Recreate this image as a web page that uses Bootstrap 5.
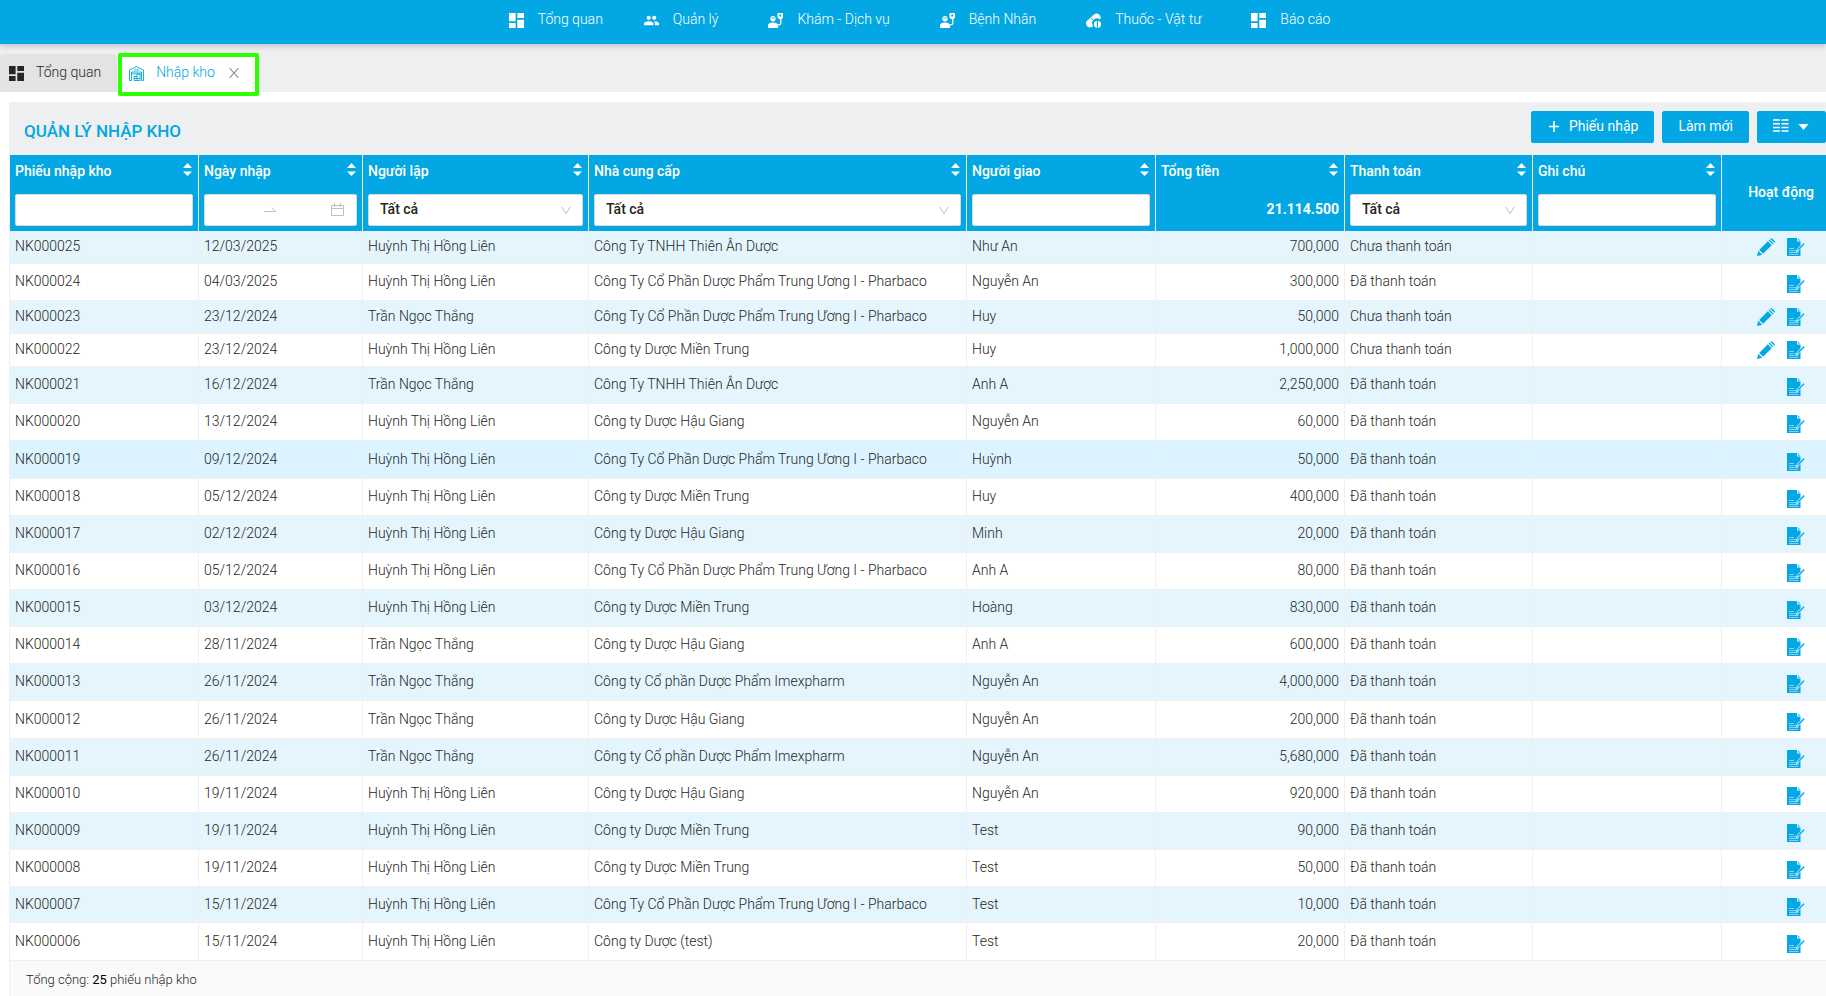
<!DOCTYPE html>
<html lang="vi">
<head>
<meta charset="utf-8">
<meta name="viewport" content="width=device-width, initial-scale=1">
<title>Quản lý nhập kho</title>
<link href="https://cdn.jsdelivr.net/npm/bootstrap@5.3.0/dist/css/bootstrap.min.css" rel="stylesheet">
<style>
  :root { --brand: #02a7e3; --panel: #eeeff1; --line: #f0f0f0; }
  body { font-family: Roboto, "Liberation Sans", sans-serif; font-size: 14px; font-weight: 300; line-height: 22px; color: #262626; background: #fff; overflow-x: hidden; }
  a { text-decoration: none; }
  svg { display: block; flex: none; fill: currentColor; }
  .ico { width: 15px; height: 15px; }
  .topbar { background: var(--brand); height: 44px; padding: 8px 0 0 13px; box-shadow: 0 2px 6px rgba(0,0,0,.2); z-index: 2; }
  .topbar a { color: #fff; display: flex; gap: 14px; padding: 0 25px; }
  .topbar a:first-child { padding-right: 16px; }
  .topbar .ico { margin-top: 5px; }
  .tabstrip { background: var(--panel); height: 48px; padding-top: 10px; }
  .tab-item { height: 38px; padding: 7px 16px 0 9px; gap: 12px; background: #e3e3e3; color: #262626; border-radius: 4px 4px 0 0; }
  .tab-item .ico { margin-top: 5px; }
  .tab-open { height: 43px; margin: -1px 0 0 1px; border: 4px solid #2bff00; border-radius: 2px; background: #fff; padding: 4px 16px 0 7px; gap: 12px; z-index: 1; }
  .tab-open a { color: var(--brand); }
  .tab-open .ico { color: var(--brand); margin-top: 5px; }
  .tab-open button { border: 0; background: none; padding: 0; margin: 7px 0 0 2px; height: 10px; color: #8c8c8c; }
  .panel { margin: 10px 0 0 9px; }
  .panel-head { background: var(--panel); height: 53px; padding: 0 0 0 15px; }
  .panel-head h1 { font-size: 17px; font-weight: 500; line-height: 24px; margin: 4px 0 0; color: var(--brand); }
  .btn-brand { --bs-btn-color: #fff; --bs-btn-bg: var(--brand); --bs-btn-border-color: var(--brand); --bs-btn-hover-color: #fff; --bs-btn-hover-bg: #0596cb; --bs-btn-active-bg: #0596cb; --bs-btn-active-color: #fff; --bs-btn-border-radius: 2px; --bs-btn-font-size: 14px; --bs-btn-line-height: 22px; height: 32px; padding: 3px 15px 5px; }
  .stock { table-layout: fixed; border-left: 1px solid var(--line); margin: 0; border-collapse: separate; border-spacing: 0; width: 100%; }
  .stock th { background: var(--brand); color: #fff; font-weight: 500; padding: 5px; height: 76px; vertical-align: top; border-right: 1px solid var(--line); }
  .stock th:last-child, .stock td:last-child { border-right: 0; }
  .head-line { height: 34px; }
  .sort { width: 9px; height: 13px; margin: 3px 1px 0 0; }
  .box { display: block; width: 100%; height: 32px; border: 1px solid #d9d9d9; border-radius: 2px; background-color: #fff; color: #262626; font-size: 14px; font-weight: 500; line-height: 22px; padding: 3px 11px 5px; }
  select.box { appearance: none; background-image: url("data:image/svg+xml,%3Csvg xmlns='http://www.w3.org/2000/svg' viewBox='0 0 10 9'%3E%3Cpath d='M.6.8 5 7.6 9.4.8' fill='none' stroke='%23bfbfbf'/%3E%3C/svg%3E"); background-repeat: no-repeat; background-size: 10px 9px; background-position: right 11px center; }
  .range { color: #bfbfbf; padding-right: 12px; }
  .range input { border: 0; padding: 0; min-width: 0; flex: 1 1 0; outline: 0; font-size: 14px; height: 20px; }
  .range-arrow { margin: 0 12px 0 4px; }
  .stock td { height: 37px; padding: 0 5px 2px; vertical-align: middle; border-right: 1px solid var(--line); border-bottom: 1px solid var(--line); white-space: nowrap; }
  .stock tbody tr:nth-child(odd) { background: #e4f5fd; }
  .stock tbody tr.is-hover { background: #dbf4ff; }
  .stock .h-33 td { height: 33px; }
  .stock .h-36 td { height: 36px; }
  .stock .h-38 td { height: 38px; }
  .stock td:nth-child(6) { text-align: right; }
  .stock td.acts { padding: 4px 21px 0 0; }
  .stock .h-33 td.acts { padding-top: 0; }
  .acts div { display: flex; justify-content: flex-end; gap: 12px; }
  .acts a { color: var(--brand); }
  .acts svg { width: 18px; height: 18px; }
  .total { background: #fafafa; border-left: 1px solid var(--line); padding: 8px 16px 0; font-size: 13px; }
  .total b { font-weight: 400; color: #000; }
</style>
</head>
<body class="min-vh-100 d-flex flex-column">

<svg class="d-none" aria-hidden="true">
  <symbol id="i-dash" viewBox="0 0 15 15"><path d="M0 0h6.6v8.3H0zM0 10h6.6v5H0zM8.3 0H15v5H8.3zM8.3 6.7H15V15H8.3z"/></symbol>
  <symbol id="i-people" viewBox="1 1 22 22"><path d="M16 11c1.66 0 2.99-1.34 2.99-3S17.66 5 16 5s-3 1.34-3 3 1.340 3 3 3zm-8 0c1.66 0 2.990-1.340 2.990-3S9.660 5 8 5 5 6.340 5 8s1.340 3 3 3zm0 2c-2.330 0-7 1.170-7 3.500V19h14v-2.500c0-2.330-4.670-3.500-7-3.500zm8 0c-.29 0-.62.020-.97.050 1.160.840 1.970 1.970 1.970 3.450V19h6v-2.500c0-2.330-4.670-3.500-7-3.500z"/></symbol>
  <symbol id="i-patient" viewBox="0 0 15 15"><path d="M5 3c1.600 0 2.700 1.200 2.700 2.700S6.600 8.500 5 8.500 2.300 7.300 2.300 5.700 3.400 3 5 3zM0 15v-2.600C0 10.200 3 9.400 5 9.400s5 .8 5 3V15z"/><path d="M9.500 0H15v4.600l-1.500 1.300h-2.500L9.500 4.600zm1.800 1.500v2h1.900v-2z" fill-rule="evenodd"/><path d="M12.800 5v5.300q0 1.400-2.800 1.700" fill="none" stroke="currentColor" stroke-width="1.300"/><path d="M3.300 5.100h3.400" stroke="#02a7e3" stroke-width=".8"/></symbol>
  <symbol id="i-pill" viewBox="0 0 15 15"><path d="M1.500 7.200 8.400 1.200a4 4 0 0 1 5.600 5.400 4.700 4.700 0 0 0-6.800 6.400A4 4 0 0 1 .6 12.400 4 4 0 0 1 1.500 7.200z"/><path d="m4.800 4.600 3.800 3.600" stroke="#02a7e3" stroke-width=".9"/><path d="M10.900 7.800v7.100a3.600 3.600 0 0 1 0-7.100zM12 7.800a3.600 3.600 0 0 1 0 7.100z"/></symbol>
  <symbol id="i-store" viewBox="0 0 15 15"><g fill="none" stroke="currentColor" stroke-width=".9"><path d="M.5 14.500V4L7.500.6l7 3.400v10.500h-2V6h-10v8.500zM2.500 7.800h10M5 3.900h5M5 14.500v-4h3v-2.500h3v6.500zM8 10.500v4M5 12.500h6"/></g></symbol>
  <symbol id="i-sort" viewBox="0 0 9 13"><path d="M4.500 0 9 5H0zM0 8.500h9L4.500 13z"/></symbol>
  <symbol id="i-edit" viewBox="0 0 18 18"><path d="m0 18 1.300-5.200 3.900 3.900zM2.200 11.900l8.600-8.600 3.900 3.900-8.600 8.600zM11.600 2.500l.9-.9 3.900 3.900-.9.9zM13.400.9c.7-.7 1.200-.8 1.900-.2l2.100 2.100c.7.700.6 1.200 0 1.900z"/></symbol>
  <symbol id="i-note" viewBox="0 0 18 18"><path d="M0 0h10v3.500h3.500V18H0z"/><path d="M10.800 0 13.500 2.800h-2.700z" opacity=".7"/><path d="M2 10.500h5M2 12.700h9.500M2 14.500h9.500M2 16.400h9.500" stroke="#fff" stroke-opacity=".65" stroke-width=".8"/><path d="m9.400 13.800 1-2.800L16.600 4.800 18 6.200 12 12.400z" stroke="#e4f5fd" stroke-width=".9"/></symbol>
</svg>

<header class="position-relative">
  <nav class="topbar position-relative d-flex justify-content-center" aria-label="Menu chính">
    <a href="#"><svg class="ico"><use href="#i-dash"/></svg>Tổng quan</a>
    <a href="#"><svg class="ico"><use href="#i-people"/></svg>Quản lý</a>
    <a href="#"><svg class="ico"><use href="#i-patient"/></svg>Khám - Dịch vụ</a>
    <a href="#"><svg class="ico"><use href="#i-patient"/></svg>Bệnh Nhân</a>
    <a href="#"><svg class="ico"><use href="#i-pill"/></svg>Thuốc - Vật tư</a>
    <a href="#"><svg class="ico"><use href="#i-dash"/></svg>Báo cáo</a>
  </nav>
  <div class="tabstrip d-flex">
    <a href="#" class="tab-item d-flex"><svg class="ico"><use href="#i-dash"/></svg>Tổng quan</a>
    <div class="tab-open position-relative d-flex">
      <svg class="ico"><use href="#i-store"/></svg><a href="#">Nhập kho</a>
      <button type="button" aria-label="Đóng"><svg width="10" height="10" viewBox="0 0 10 10"><path d="m.7.200 8.600 9.600M9.300.2.700 9.800" stroke="currentColor" stroke-width="1.100"/></svg></button>
    </div>
  </div>
</header>

<main class="panel d-flex flex-column flex-grow-1">
  <div class="panel-head d-flex align-items-center justify-content-between">
    <h1>QUẢN LÝ NHẬP KHO</h1>
    <div class="d-flex gap-2 pb-1">
      <button type="button" class="btn btn-brand d-flex align-items-center"><svg class="me-2" width="14" height="14" viewBox="0 0 14 14"><path d="M7 2v11M2 7.500h10" stroke="currentColor" stroke-width="1.600"/></svg>Phiếu nhập</button>
      <button type="button" class="btn btn-brand">Làm mới</button>
      <button type="button" class="btn btn-brand d-flex align-items-center" aria-label="Chọn cột"><svg width="37" height="14" viewBox="0 0 37 14"><path d="M0 1h7M8.500 1h7M0 4.700h7M8.500 4.700h7M0 8.400h7M8.500 8.400h7M0 12.100h7M8.500 12.100h7" stroke="currentColor" stroke-width="1.500"/><path d="M25.500 5h10l-5 6z"/></svg></button>
    </div>
  </div>

  <table class="stock">
    <colgroup><col width="189"><col width="164"><col width="226"><col><col width="189"><col width="189"><col width="188"><col width="189"><col width="104"></colgroup>
    <thead>
      <tr>
        <th><div class="head-line d-flex justify-content-between"><label for="f-code">Phiếu nhập kho</label><svg class="sort"><use href="#i-sort"/></svg></div><input id="f-code" class="box" type="text"></th>
        <th><div class="head-line d-flex justify-content-between"><label for="f-from">Ngày nhập</label><svg class="sort"><use href="#i-sort"/></svg></div>
          <div class="box range d-flex align-items-center"><input id="f-from" type="text" aria-label="Từ ngày"><svg class="range-arrow" width="12" height="5" viewBox="0 0 12 5"><path d="M0 4.500h12M8 .8l3.500 3.500" fill="none" stroke="currentColor"/></svg><input type="text" aria-label="Đến ngày"><svg width="13" height="13" viewBox="0 0 13 13"><path d="M.5 2.500h12v10H.5zM.5 5.500h12M3.500 0v4M9.500 0v4" fill="none" stroke="currentColor"/></svg></div></th>
        <th><div class="head-line d-flex justify-content-between"><label for="f-user">Người lập</label><svg class="sort"><use href="#i-sort"/></svg></div><select id="f-user" class="box"><option>Tất cả</option></select></th>
        <th><div class="head-line d-flex justify-content-between"><label for="f-sup">Nhà cung cấp</label><svg class="sort"><use href="#i-sort"/></svg></div><select id="f-sup" class="box"><option>Tất cả</option></select></th>
        <th><div class="head-line d-flex justify-content-between"><label for="f-ship">Người giao</label><svg class="sort"><use href="#i-sort"/></svg></div><input id="f-ship" class="box" type="text"></th>
        <th><div class="head-line d-flex justify-content-between"><span>Tổng tiền</span><svg class="sort"><use href="#i-sort"/></svg></div><div class="text-end fw-bold pt-1">21.114.500</div></th>
        <th><div class="head-line d-flex justify-content-between"><label for="f-pay">Thanh toán</label><svg class="sort"><use href="#i-sort"/></svg></div><select id="f-pay" class="box"><option>Tất cả</option></select></th>
        <th><div class="head-line d-flex justify-content-between"><label for="f-note">Ghi chú</label><svg class="sort"><use href="#i-sort"/></svg></div><input id="f-note" class="box" type="text"></th>
        <th class="align-middle text-end pe-2 pb-2"><span class="me-1">Hoạt động</span></th>
      </tr>
    </thead>
    <tbody>
      <tr class="h-33"><td>NK000025</td><td>12/03/2025</td><td>Huỳnh Thị Hồng Liên</td><td>Công Ty TNHH Thiên Ân Dược</td><td>Như An</td><td>700,000</td><td>Chưa thanh toán</td><td></td><td class="acts"><div><a href="#" aria-label="Sửa"><svg><use href="#i-edit"/></svg></a><a href="#" aria-label="Chi tiết"><svg><use href="#i-note"/></svg></a></div></td></tr>
      <tr><td>NK000024</td><td>04/03/2025</td><td>Huỳnh Thị Hồng Liên</td><td>Công Ty Cổ Phần Dược Phẩm Trung Ương I - Pharbaco</td><td>Nguyễn An</td><td>300,000</td><td>Đã thanh toán</td><td></td><td class="acts"><div><a href="#" aria-label="Chi tiết"><svg><use href="#i-note"/></svg></a></div></td></tr>
      <tr class="h-33"><td>NK000023</td><td>23/12/2024</td><td>Trần Ngọc Thắng</td><td>Công Ty Cổ Phần Dược Phẩm Trung Ương I - Pharbaco</td><td>Huy</td><td>50,000</td><td>Chưa thanh toán</td><td></td><td class="acts"><div><a href="#" aria-label="Sửa"><svg><use href="#i-edit"/></svg></a><a href="#" aria-label="Chi tiết"><svg><use href="#i-note"/></svg></a></div></td></tr>
      <tr class="h-33"><td>NK000022</td><td>23/12/2024</td><td>Huỳnh Thị Hồng Liên</td><td>Công ty Dược Miền Trung</td><td>Huy</td><td>1,000,000</td><td>Chưa thanh toán</td><td></td><td class="acts"><div><a href="#" aria-label="Sửa"><svg><use href="#i-edit"/></svg></a><a href="#" aria-label="Chi tiết"><svg><use href="#i-note"/></svg></a></div></td></tr>
      <tr><td>NK000021</td><td>16/12/2024</td><td>Trần Ngọc Thắng</td><td>Công Ty TNHH Thiên Ân Dược</td><td>Anh A</td><td>2,250,000</td><td>Đã thanh toán</td><td></td><td class="acts"><div><a href="#" aria-label="Chi tiết"><svg><use href="#i-note"/></svg></a></div></td></tr>
      <tr><td>NK000020</td><td>13/12/2024</td><td>Huỳnh Thị Hồng Liên</td><td>Công ty Dược Hậu Giang</td><td>Nguyễn An</td><td>60,000</td><td>Đã thanh toán</td><td></td><td class="acts"><div><a href="#" aria-label="Chi tiết"><svg><use href="#i-note"/></svg></a></div></td></tr>
      <tr class="h-38 is-hover"><td>NK000019</td><td>09/12/2024</td><td>Huỳnh Thị Hồng Liên</td><td>Công Ty Cổ Phần Dược Phẩm Trung Ương I - Pharbaco</td><td>Huỳnh</td><td>50,000</td><td>Đã thanh toán</td><td></td><td class="acts"><div><a href="#" aria-label="Chi tiết"><svg><use href="#i-note"/></svg></a></div></td></tr>
      <tr><td>NK000018</td><td>05/12/2024</td><td>Huỳnh Thị Hồng Liên</td><td>Công ty Dược Miền Trung</td><td>Huy</td><td>400,000</td><td>Đã thanh toán</td><td></td><td class="acts"><div><a href="#" aria-label="Chi tiết"><svg><use href="#i-note"/></svg></a></div></td></tr>
      <tr><td>NK000017</td><td>02/12/2024</td><td>Huỳnh Thị Hồng Liên</td><td>Công ty Dược Hậu Giang</td><td>Minh</td><td>20,000</td><td>Đã thanh toán</td><td></td><td class="acts"><div><a href="#" aria-label="Chi tiết"><svg><use href="#i-note"/></svg></a></div></td></tr>
      <tr><td>NK000016</td><td>05/12/2024</td><td>Huỳnh Thị Hồng Liên</td><td>Công Ty Cổ Phần Dược Phẩm Trung Ương I - Pharbaco</td><td>Anh A</td><td>80,000</td><td>Đã thanh toán</td><td></td><td class="acts"><div><a href="#" aria-label="Chi tiết"><svg><use href="#i-note"/></svg></a></div></td></tr>
      <tr><td>NK000015</td><td>03/12/2024</td><td>Huỳnh Thị Hồng Liên</td><td>Công ty Dược Miền Trung</td><td>Hoàng</td><td>830,000</td><td>Đã thanh toán</td><td></td><td class="acts"><div><a href="#" aria-label="Chi tiết"><svg><use href="#i-note"/></svg></a></div></td></tr>
      <tr><td>NK000014</td><td>28/11/2024</td><td>Trần Ngọc Thắng</td><td>Công ty Dược Hậu Giang</td><td>Anh A</td><td>600,000</td><td>Đã thanh toán</td><td></td><td class="acts"><div><a href="#" aria-label="Chi tiết"><svg><use href="#i-note"/></svg></a></div></td></tr>
      <tr><td>NK000013</td><td>26/11/2024</td><td>Trần Ngọc Thắng</td><td>Công ty Cổ phần Dược Phẩm Imexpharm</td><td>Nguyễn An</td><td>4,000,000</td><td>Đã thanh toán</td><td></td><td class="acts"><div><a href="#" aria-label="Chi tiết"><svg><use href="#i-note"/></svg></a></div></td></tr>
      <tr class="h-38"><td>NK000012</td><td>26/11/2024</td><td>Trần Ngọc Thắng</td><td>Công ty Dược Hậu Giang</td><td>Nguyễn An</td><td>200,000</td><td>Đã thanh toán</td><td></td><td class="acts"><div><a href="#" aria-label="Chi tiết"><svg><use href="#i-note"/></svg></a></div></td></tr>
      <tr><td>NK000011</td><td>26/11/2024</td><td>Trần Ngọc Thắng</td><td>Công ty Cổ phần Dược Phẩm Imexpharm</td><td>Nguyễn An</td><td>5,680,000</td><td>Đã thanh toán</td><td></td><td class="acts"><div><a href="#" aria-label="Chi tiết"><svg><use href="#i-note"/></svg></a></div></td></tr>
      <tr><td>NK000010</td><td>19/11/2024</td><td>Huỳnh Thị Hồng Liên</td><td>Công ty Dược Hậu Giang</td><td>Nguyễn An</td><td>920,000</td><td>Đã thanh toán</td><td></td><td class="acts"><div><a href="#" aria-label="Chi tiết"><svg><use href="#i-note"/></svg></a></div></td></tr>
      <tr><td>NK000009</td><td>19/11/2024</td><td>Huỳnh Thị Hồng Liên</td><td>Công ty Dược Miền Trung</td><td>Test</td><td>90,000</td><td>Đã thanh toán</td><td></td><td class="acts"><div><a href="#" aria-label="Chi tiết"><svg><use href="#i-note"/></svg></a></div></td></tr>
      <tr><td>NK000008</td><td>19/11/2024</td><td>Huỳnh Thị Hồng Liên</td><td>Công ty Dược Miền Trung</td><td>Test</td><td>50,000</td><td>Đã thanh toán</td><td></td><td class="acts"><div><a href="#" aria-label="Chi tiết"><svg><use href="#i-note"/></svg></a></div></td></tr>
      <tr class="h-36"><td>NK000007</td><td>15/11/2024</td><td>Huỳnh Thị Hồng Liên</td><td>Công Ty Cổ Phần Dược Phẩm Trung Ương I - Pharbaco</td><td>Test</td><td>10,000</td><td>Đã thanh toán</td><td></td><td class="acts"><div><a href="#" aria-label="Chi tiết"><svg><use href="#i-note"/></svg></a></div></td></tr>
      <tr class="h-38"><td>NK000006</td><td>15/11/2024</td><td>Huỳnh Thị Hồng Liên</td><td>Công ty Dược (test)</td><td>Test</td><td>20,000</td><td>Đã thanh toán</td><td></td><td class="acts"><div><a href="#" aria-label="Chi tiết"><svg><use href="#i-note"/></svg></a></div></td></tr>
    </tbody>
  </table>
  <footer class="total flex-grow-1">Tổng cộng: <b>25</b> phiếu nhập kho</footer>
</main>

<script src="https://cdn.jsdelivr.net/npm/bootstrap@5.3.0/dist/js/bootstrap.bundle.min.js"></script>
</body>
</html>
